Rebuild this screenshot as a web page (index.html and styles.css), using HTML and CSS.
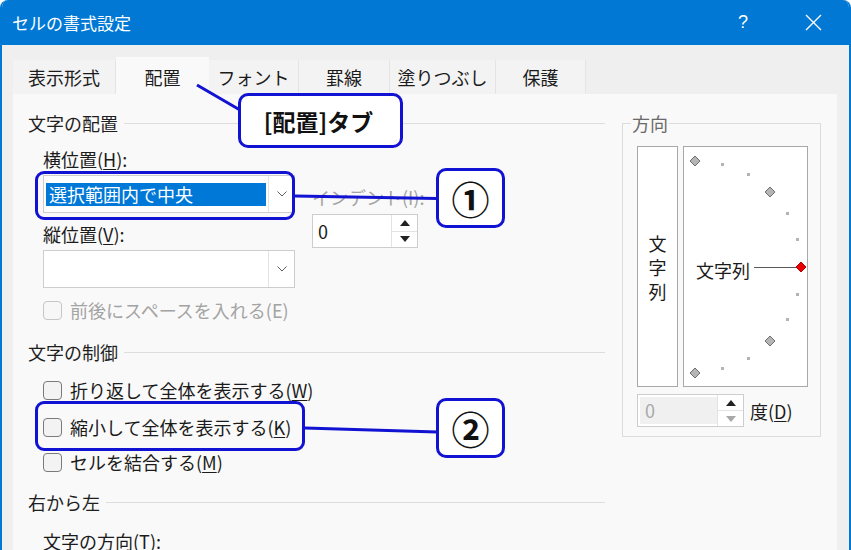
FILE: index.html
```html
<!DOCTYPE html>
<html lang="ja">
<head>
<meta charset="utf-8">
<title>セルの書式設定</title>
<link rel="stylesheet" href="styles.css">
</head>
<body>
<div class="window">
  <div class="titlebar">
    <span class="title">セルの書式設定</span>
    <span class="help">?</span>
    <span class="close"><svg width="17" height="17" viewBox="0 0 17 17"><path d="M1 1L16 16M16 1L1 16" stroke="#fff" stroke-width="1.4" fill="none"/></svg></span>
  </div>

  <div class="tabs">
    <div class="tab t1">表示形式</div>
    <div class="tab t2 active">配置</div>
    <div class="tab t3">フォント</div>
    <div class="tab t4">罫線</div>
    <div class="tab t5">塗りつぶし</div>
    <div class="tab t6">保護</div>
  </div>

  <div class="panel">
    <div class="leftcol">
      <div class="group-title"><span>文字の配置</span><i class="rule"></i></div>

      <div class="align-grid">
        <div class="stack">
          <div class="label">横位置(<u>H</u>):</div>
          <div class="combo">
            <div class="combo-value selected">選択範囲内で中央</div>
            <div class="combo-btn"><svg width="10" height="6" viewBox="0 0 10 6"><path d="M0.5 0.5L5 5L9.5 0.5" stroke="#606060" stroke-width="1" fill="none"/></svg></div>
          </div>
          <div class="label l2">縦位置(<u>V</u>):</div>
          <div class="combo">
            <div class="combo-value"></div>
            <div class="combo-btn"><svg width="10" height="6" viewBox="0 0 10 6"><path d="M0.5 0.5L5 5L9.5 0.5" stroke="#606060" stroke-width="1" fill="none"/></svg></div>
          </div>
        </div>
        <div class="indent">
          <div class="label disabled">インデント(I):</div>
          <div class="spin indent-spin">
            <div class="spin-value">0</div>
            <div class="spin-btns">
              <span class="sb"><svg width="10" height="6" viewBox="0 0 10 6"><path d="M5 0L10 6H0Z" fill="#222"/></svg></span>
              <span class="sb"><svg width="10" height="6" viewBox="0 0 10 6"><path d="M0 0H10L5 6Z" fill="#222"/></svg></span>
            </div>
          </div>
        </div>
      </div>

      <div class="check disabled row-space"><span class="box"></span>前後にスペースを入れる(E)</div>

      <div class="group-title g2"><span>文字の制御</span><i class="rule"></i></div>
      <div class="check row-wrap"><span class="box"></span>折り返して全体を表示する(<u>W</u>)</div>
      <div class="check row-shrink"><span class="box"></span>縮小して全体を表示する(<u>K</u>)</div>
      <div class="check row-merge"><span class="box"></span>セルを結合する(<u>M</u>)</div>

      <div class="group-title g3"><span>右から左</span><i class="rule"></i></div>
      <div class="label dir">文字の方向(<u>T</u>):</div>
    </div>

    <fieldset class="orient">
      <legend>方向</legend>
      <div class="dial-row">
        <div class="vbox"><span>文</span><span>字</span><span>列</span></div>
        <div class="dial">
          <svg width="123" height="239" viewBox="1 1 123 239">
            <polygon points="12,10 17,15 12,20 7,15" fill="#b5b5b5" stroke="#6e6e6e" stroke-width="1"/>
            <rect x="38" y="17" width="3" height="3" fill="#b4b4b4"/>
            <rect x="64" y="27" width="3" height="3" fill="#b4b4b4"/>
            <polygon points="87,41 92,46 87,51 82,46" fill="#b5b5b5" stroke="#6e6e6e" stroke-width="1"/>
            <rect x="103" y="66" width="3" height="3" fill="#b4b4b4"/>
            <rect x="113" y="92" width="3" height="3" fill="#b4b4b4"/>
            <line x1="71" y1="121.5" x2="113" y2="121.5" stroke="#5a5a5a" stroke-width="1"/>
            <polygon points="118,116 123,121 118,126 113,121" fill="#e60000" stroke="#b40000" stroke-width="1"/>
            <rect x="113" y="147" width="3" height="3" fill="#b4b4b4"/>
            <rect x="103" y="172" width="3" height="3" fill="#b4b4b4"/>
            <polygon points="87,190 92,195 87,200 82,195" fill="#b5b5b5" stroke="#6e6e6e" stroke-width="1"/>
            <rect x="64" y="211" width="3" height="3" fill="#b4b4b4"/>
            <rect x="38" y="221" width="3" height="3" fill="#b4b4b4"/>
            <polygon points="12,222 17,227 12,232 7,227" fill="#b5b5b5" stroke="#6e6e6e" stroke-width="1"/>
            <text x="13" y="132" class="dial-text">文字列</text>
          </svg>
        </div>
      </div>
      <div class="deg-row">
        <div class="spin deg-spin">
          <div class="spin-value">0</div>
          <div class="spin-btns">
            <span class="sb"><svg width="10" height="6" viewBox="0 0 10 6"><path d="M5 0L10 6H0Z" fill="#222"/></svg></span>
            <span class="sb"><svg width="10" height="6" viewBox="0 0 10 6"><path d="M0 0H10L5 6Z" fill="#a8a8a8"/></svg></span>
          </div>
        </div>
        <span class="deg-label">度(<u>D</u>)</span>
      </div>
    </fieldset>
  </div>

  <svg class="connectors" width="851" height="550" viewBox="0 0 851 550">
    <path d="M197 85L240 110" stroke="#1212d2" stroke-width="3" fill="none"/>
    <path d="M295 196L437 198.5" stroke="#1212d2" stroke-width="3" fill="none"/>
    <path d="M305 428L437 432" stroke="#1212d2" stroke-width="3" fill="none"/>
  </svg>
  <div class="callout tab-callout">[配置]タブ</div>
  <div class="callout frame combo-frame"></div>
  <div class="callout frame check-frame"></div>
  <div class="callout num num1">①</div>
  <div class="callout num num2">②</div>
</div>
</body>
</html>
```

FILE: styles.css
```css
* { box-sizing: border-box; }
html, body { margin: 0; padding: 0; }
body {
  width: 851px;
  height: 550px;
  overflow: hidden;
  background: #ffffff;
  font-family: "Noto Sans CJK JP", "Noto Sans", sans-serif;
  font-size: 18px;
  color: #1b1b1b;
}
u { text-decoration-thickness: 1px; text-underline-offset: 2px; }

.window {
  position: relative;
  width: 851px;
  height: 550px;
  background: #efefef;
  border-left: 2px solid #0078d4;
  border-right: 2px solid #0078d4;
  border-radius: 8px 8px 0 0;
  overflow: hidden;
}

/* title bar */
.titlebar {
  height: 45px;
  background: #0078d4;
  color: #ffffff;
  display: flex;
  align-items: center;
  padding: 0 13px 0 10px;
  font-size: 17px;
}
.title { line-height: 24px; }
.help { margin-left: auto; width: 20px; text-align: center; margin-right: 37px; font-size: 18px; font-family: "Liberation Sans", sans-serif; }
.close { width: 46px; display: flex; justify-content: center; align-items: center; }

/* tabs */
.tabs {
  margin-top: 12px;
  padding-left: 11px;
  height: 37px;
  display: flex;
  align-items: flex-end;
}
.tab {
  height: 34px;
  line-height: 34px;
  text-align: center;
  background: #f3f3f3;
  border-right: 1px solid #e4e4e4;
  color: #1b1b1b;
}
.tab.active { height: 37px; padding-top: 3px; background: #f9f9f9; border-right: none; }
.t1 { width: 103px; }
.t2 { width: 93px; }
.t3 { width: 90px; }
.t4 { width: 91px; }
.t5 { width: 106px; }
.t6 { width: 90px; }

/* panel */
.panel {
  margin-left: 11px;
  width: 824px;
  height: 456px;
  background: #f9f9f9;
  padding: 17px 0 0 15px;
  display: flex;
  align-items: flex-start;
}
.leftcol { width: 577px; flex: none; }

.group-title {
  display: flex;
  align-items: center;
  height: 24px;
  line-height: 24px;
  color: #1f1f1f;
}
.group-title .rule { flex: 1; height: 1px; background: #dedede; margin-left: 6px; }
.g2 { margin-top: 18px; }
.g3 { margin-top: 16px; }

.label { height: 24px; line-height: 24px; white-space: nowrap; }
.label.disabled { color: #a3a3a3; }
.label.dir { margin-top: 15px; margin-left: 15px; }

.align-grid {
  display: grid;
  grid-template-columns: 252px 106px;
  column-gap: 17px;
  margin-top: 12px;
  padding-left: 15px;
}
.combo {
  margin-top: 4px;
  height: 38px;
  display: flex;
  background: #ffffff;
  border: 1px solid #cdcdcd;
}
.combo-value {
  flex: 1;
  margin: 7px 2px 6px 2px;
  line-height: 23px;
  padding-left: 3px;
  white-space: nowrap;
}
.combo-value.selected { background: #0078d7; color: #ffffff; }
.combo-btn {
  width: 26px;
  border-left: 1px solid #e3e3e3;
  display: flex;
  align-items: center;
  justify-content: center;
}
.l2 { margin-top: 9px; }

.indent { padding-top: 38px; }
.spin {
  display: flex;
  border: 1px solid #cdcdcd;
  background: #ffffff;
}
.indent-spin { margin-top: 5px; height: 34px; width: 106px; }
.spin-value { flex: 1; padding-left: 5px; line-height: 32px; }
.spin-btns { width: 26px; border-left: 1px solid #e3e3e3; display: flex; flex-direction: column; }
.sb { flex: 1; display: flex; align-items: center; justify-content: center; }
.sb + .sb { border-top: 1px solid #e3e3e3; }

/* checkboxes */
.check {
  display: flex;
  align-items: center;
  height: 24px;
  margin-left: 15px;
  white-space: nowrap;
}
.check .box {
  width: 19px;
  height: 19px;
  border: 1px solid #7a7a7a;
  border-radius: 4px;
  background: #f3f3f3;
  margin-right: 8px;
  flex: none;
}
.check.disabled { color: #a3a3a3; }
.check.disabled .box { border-color: #c6c6c6; background: #f7f7f7; }
.row-space { margin-top: 10px; }
.row-wrap { margin-top: 14px; }
.row-shrink { margin-top: 13px; }
.row-merge { margin-top: 11px; }

/* orientation group */
.orient {
  flex: none;
  width: 199px;
  margin: 0 0 0 17px;
  padding: 0 12px 9px 14px;
  border: 1px solid #dcdcdc;
  min-width: 0;
}
.orient legend {
  margin-left: -6px;
  padding: 0 1px;
  line-height: 24px;
  color: #6a6a6a;
}
.dial-row { display: flex; gap: 5px; margin-top: 11px; }
.vbox {
  width: 41px;
  height: 241px;
  background: #ffffff;
  border: 1px solid #a8a8a8;
  display: flex;
  flex-direction: column;
  align-items: center;
  justify-content: center;
  line-height: 24px;
}
.dial {
  width: 125px;
  height: 241px;
  background: #ffffff;
  border: 1px solid #a8a8a8;
}
.dial svg { display: block; }
.dial-text { font-family: "Noto Sans CJK JP", sans-serif; font-size: 18px; fill: #1b1b1b; }

.deg-row { display: flex; align-items: center; margin-top: 7px; }
.deg-spin { width: 107px; height: 33px; }
.deg-spin .spin-value { background: #f0f0f0; color: #a8a8a8; margin: 2px 0 2px 2px; line-height: 27px; padding-left: 5px; }
.deg-label { margin-left: 6px; line-height: 24px; }

/* annotations */
.connectors { position: absolute; left: -2px; top: 0; pointer-events: none; }
.callout {
  position: absolute;
  border: 3px solid #1212d2;
  border-radius: 10px;
}
.tab-callout {
  left: 236px; top: 93px; width: 165px; height: 55px;
  background: #ffffff;
  font-weight: 700;
  font-size: 23px;
  color: #111111;
  display: flex; align-items: center; justify-content: center;
  padding-right: 4px;
}
.frame { background: transparent; border-radius: 9px; }
.combo-frame { left: 33px; top: 171px; width: 260px; height: 49px; }
.check-frame { left: 33px; top: 401px; width: 270px; height: 50px; }
.num {
  width: 69px; height: 60px;
  background: #ffffff;
  display: flex; align-items: center; justify-content: center;
  font-size: 38px;
  font-weight: 700;
  color: #111111;
  line-height: 1;
}
.num1 { left: 434px; top: 168px; }
.num2 { left: 434px; top: 398px; }
```
